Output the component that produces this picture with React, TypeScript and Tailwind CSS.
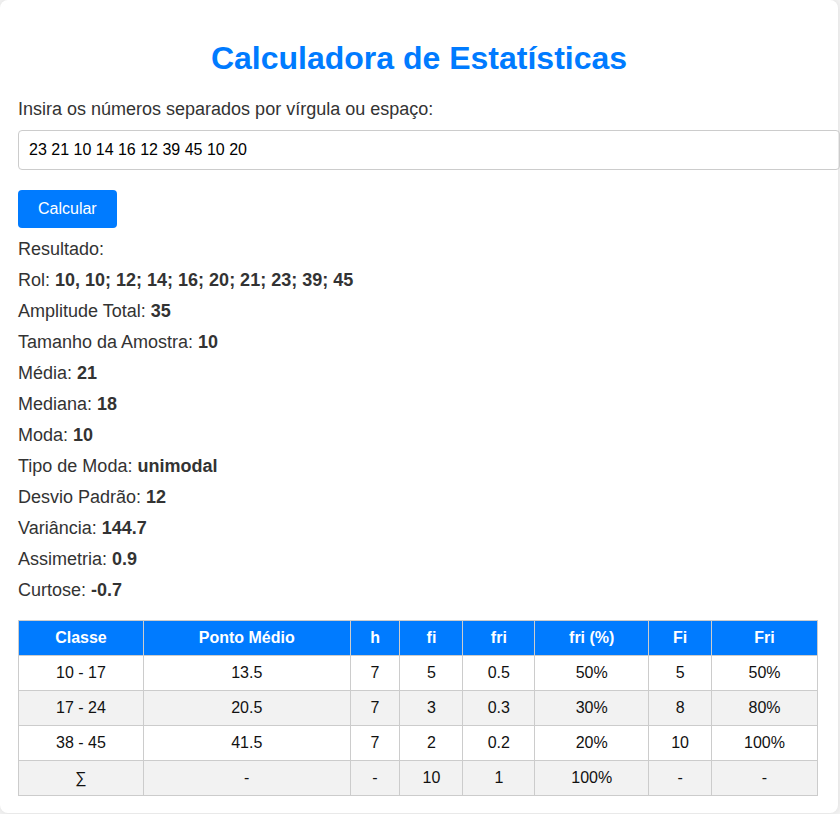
const results: [string, string][] = [
  ['Rol: ', '10, 10; 12; 14; 16; 20; 21; 23; 39; 45'],
  ['Amplitude Total: ', '35'],
  ['Tamanho da Amostra: ', '10'],
  ['Média: ', '21'],
  ['Mediana: ', '18'],
  ['Moda: ', '10'],
  ['Tipo de Moda: ', 'unimodal'],
  ['Desvio Padrão: ', '12'],
  ['Variância: ', '144.7'],
  ['Assimetria: ', '0.9'],
  ['Curtose: ', '-0.7'],
];

const headers = ['Classe', 'Ponto Médio', 'h', 'fi', 'fri', 'fri (%)', 'Fi', 'Fri'];
const widths = ['w-[125px]', 'w-[207px]', 'w-[50px]', 'w-[63px]', 'w-[72px]', 'w-[114px]', 'w-[63px]', 'w-[106px]'];

const rows = [
  ['10 - 17', '13.5', '7', '5', '0.5', '50%', '5', '50%'],
  ['17 - 24', '20.5', '7', '3', '0.3', '30%', '8', '80%'],
  ['38 - 45', '41.5', '7', '2', '0.2', '20%', '10', '100%'],
  ['∑', '-', '-', '10', '1', '100%', '-', '-'],
];

export default function App() {
  return (
    <div className="w-[840px] h-[814px] bg-[#f4f4f4] overflow-hidden font-['Liberation_Sans',Arial,sans-serif] text-[#333]">
      <div className="w-[838px] h-[813px] bg-white rounded-lg shadow-[0_0_10px_rgba(0,0,0,0.1)] pl-[18px] pt-[40px]">
        <h1 className="w-[802px] text-center text-[32px] leading-[37px] font-bold text-[#007bff]">
          Calculadora de Estatísticas
        </h1>
        <label className="block mt-[22px] text-[18px] leading-[21px]">
          Insira os números separados por vírgula ou espaço:
        </label>
        <input
          className="block mt-[10px] w-[822px] h-[40px] border border-[#ccc] rounded px-[10px] text-[16px] text-black outline-none"
          defaultValue="23 21 10 14 16 12 39 45 10 20"
        />
        <button className="mt-[20px] h-[38px] px-[20px] bg-[#007bff] text-white text-[16px] rounded">
          Calcular
        </button>
        <div className="mt-[11px] flex flex-col text-[18px] leading-[21px]">
          <p className="h-[31px]">Resultado:</p>
          {results.map(([label, value]) => (
            <p key={label} className="h-[31px]">
              {label}
              <strong className="font-bold">{value}</strong>
            </p>
          ))}
        </div>
        <table className="mt-[9px] border-collapse w-[800px] text-[16px] text-[#111]">
          <thead>
            <tr className="h-[35px] bg-[#007bff] text-white">
              {headers.map((h, i) => (
                <th key={h} className={`${widths[i]} border border-[#ccc] font-bold text-center p-0`}>
                  {h}
                </th>
              ))}
            </tr>
          </thead>
          <tbody>
            {rows.map((r, ri) => (
              <tr key={ri} className={`h-[35px] ${ri % 2 === 1 ? 'bg-[#f2f2f2]' : 'bg-white'}`}>
                {r.map((c, ci) => (
                  <td key={ci} className="border border-[#ccc] text-center p-0">
                    {c}
                  </td>
                ))}
              </tr>
            ))}
          </tbody>
        </table>
      </div>
    </div>
  );
}
